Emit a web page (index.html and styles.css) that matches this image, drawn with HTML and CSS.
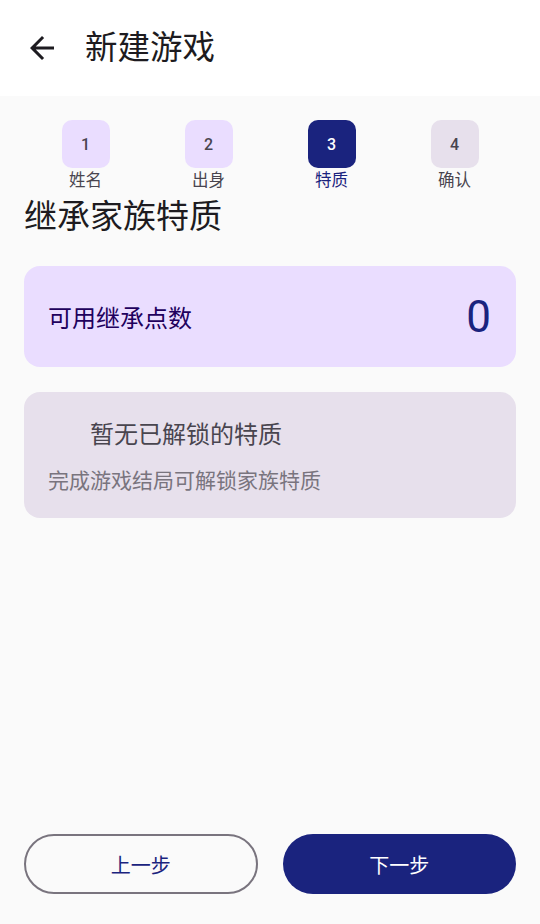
FILE: index.html
```html
<!DOCTYPE html>
<html lang="zh">
<head>
<meta charset="utf-8">
<link rel="stylesheet" href="styles.css">
</head>
<body>
<div class="app">
  <header class="topbar">
    <svg class="back" viewBox="0 0 24 24" width="36" height="36"><path d="M20 11H7.83l5.59-5.59L12 4l-8 8 8 8 1.41-1.41L7.83 13H20v-2z" fill="#1d1b20"/></svg>
    <h1 class="title">新建游戏</h1>
  </header>
  <main class="content">
    <div class="steps">
      <div class="step done"><div class="num">1</div><div class="label">姓名</div></div>
      <div class="step done"><div class="num">2</div><div class="label">出身</div></div>
      <div class="step active"><div class="num">3</div><div class="label">特质</div></div>
      <div class="step todo"><div class="num">4</div><div class="label">确认</div></div>
    </div>
    <h2 class="section">继承家族特质</h2>
    <div class="points">
      <span class="points-label">可用继承点数</span>
      <span class="points-value">0</span>
    </div>
    <div class="empty">
      <div class="empty-title">暂无已解锁的特质</div>
      <div class="empty-sub">完成游戏结局可解锁家族特质</div>
    </div>
    <div class="spacer"></div>
    <div class="actions">
      <button class="btn outline">上一步</button>
      <button class="btn filled">下一步</button>
    </div>
  </main>
</div>
</body>
</html>
```
FILE: styles.css
```css
* { box-sizing: border-box; }
html, body { margin: 0; padding: 0; }
body {
  font-family: Roboto, "Noto Sans", "Noto Sans CJK SC", sans-serif;
  background: #fafafa;
  color: #1d1b20;
}
.app {
  width: 540px;
  height: 924px;
  display: flex;
  flex-direction: column;
}
.topbar {
  height: 96px;
  background: #ffffff;
  display: flex;
  align-items: center;
  padding-left: 24px;
  flex-shrink: 0;
}
.back { display: block; }
.title {
  margin: 0 0 0 25px;
  font-size: 32.5px;
  font-weight: 400;
  color: #1d1b20;
  line-height: 40px;
}
.content {
  flex: 1;
  display: flex;
  flex-direction: column;
  padding: 24px 24px 30px;
}
.steps {
  display: grid;
  grid-template-columns: repeat(4, 1fr);
}
.step {
  display: flex;
  flex-direction: column;
  align-items: center;
}
.num {
  width: 48px;
  height: 48px;
  border-radius: 10px;
  display: flex;
  align-items: center;
  justify-content: center;
  font-size: 16px;
  font-weight: 500;
  color: #49454f;
}
.done .num { background: #eaddff; }
.active .num { background: #1a237e; color: #ffffff; }
.todo .num { background: #e7e0ec; }
.label {
  font-size: 16.5px;
  line-height: 24px;
  color: #49454f;
  margin-top: 1px;
}
.active .label { color: #1a237e; }
.section {
  margin: 3px 0 0;
  font-size: 33px;
  font-weight: 400;
  line-height: 42px;
  color: #1d1b20;
}
.points {
  margin-top: 28px;
  height: 101px;
  border-radius: 16px;
  background: #eaddff;
  display: flex;
  align-items: center;
  justify-content: space-between;
  padding: 0 25px 0 24px;
}
.points-label {
  font-size: 24px;
  color: #21005d;
}
.points-value {
  font-size: 44px;
  color: #1a237e;
  line-height: 50px;
}
.empty {
  margin-top: 25px;
  border-radius: 16px;
  background: #e7e0ec;
  padding: 27px 24px 23px;
}
.empty-title {
  font-size: 24px;
  line-height: 32px;
  color: #49454f;
  padding-left: 42px;
}
.empty-sub {
  margin-top: 16px;
  font-size: 21px;
  line-height: 28px;
  color: #79747e;
}
.spacer { flex: 1; }
.actions {
  display: grid;
  grid-template-columns: 1fr 1fr;
  gap: 25px;
}
.btn {
  height: 60px;
  border-radius: 30px;
  font-family: Roboto, "Noto Sans CJK SC", sans-serif;
  font-size: 20px;
  cursor: pointer;
}
.outline {
  background: transparent;
  border: 2px solid #79747e;
  color: #1a237e;
}
.filled {
  background: #1a237e;
  border: none;
  color: #ffffff;
}
```
